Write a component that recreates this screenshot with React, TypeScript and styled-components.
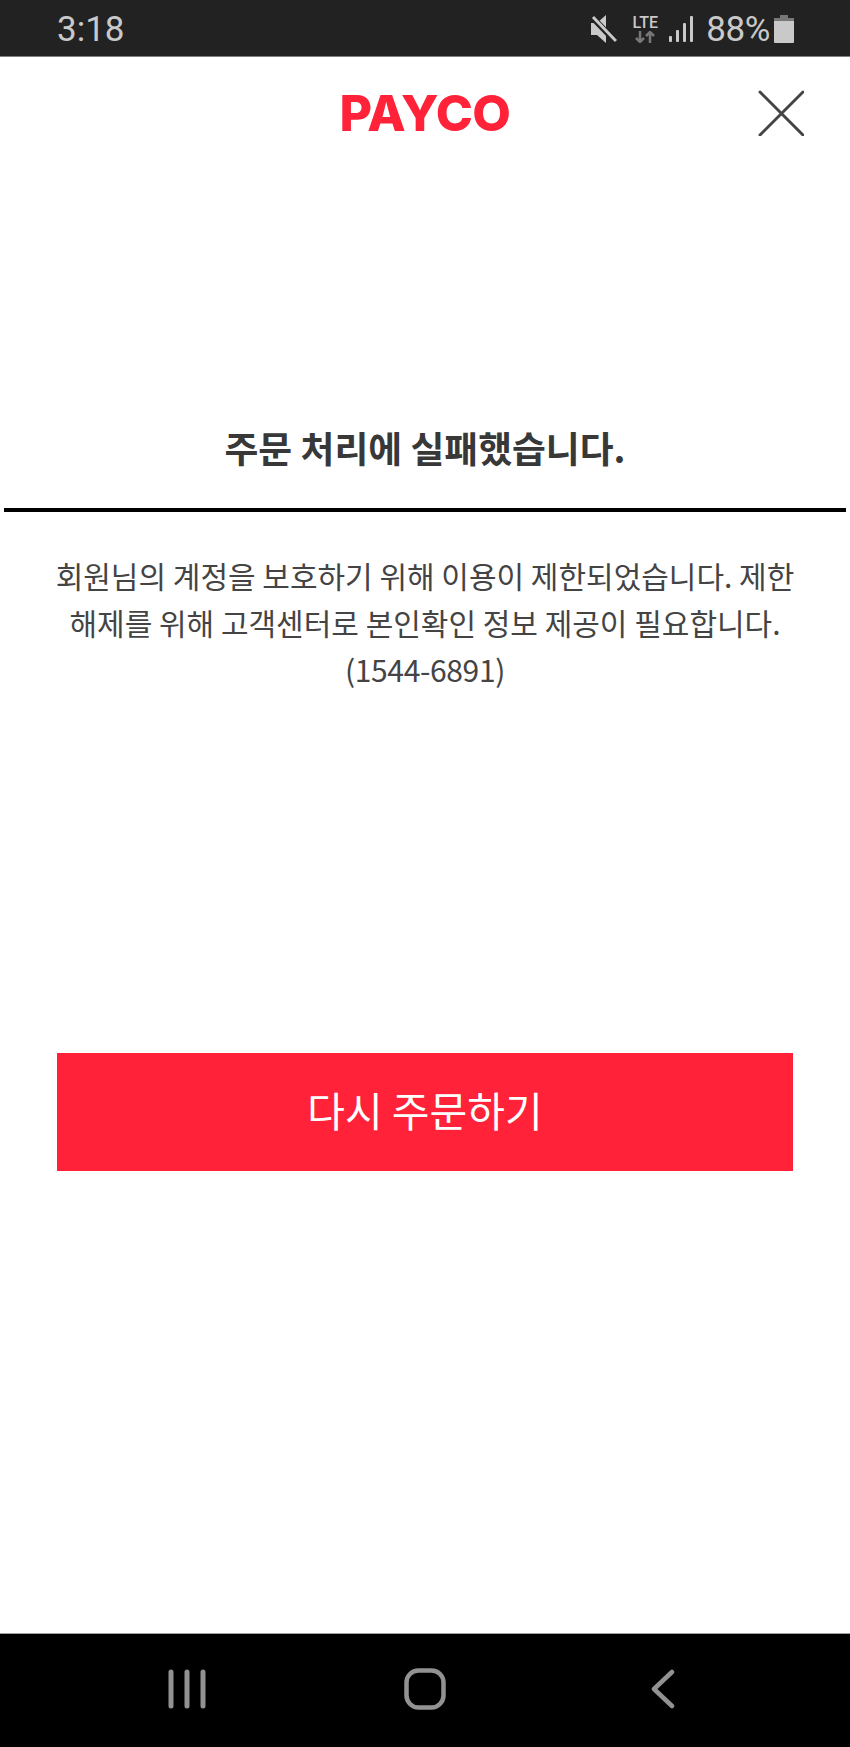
import styled, { createGlobalStyle } from "styled-components";

const colors = {
  statusBar: "#222222",
  statusText: "#c9c9c9",
  statusDim: "#777777",
  red: "#ff2239",
  title: "#383838",
  body: "#444444",
  nav: "#929292",
};

const GlobalStyle = createGlobalStyle`
  html, body {
    margin: 0;
    padding: 0;
    background: #ffffff;
  }
  * {
    box-sizing: border-box;
  }
`;

const Page = styled.div`
  width: 850px;
  height: 1747px;
  display: flex;
  flex-direction: column;
  overflow: hidden;
  background: #ffffff;
  font-family: "Noto Sans CJK KR", "Noto Sans", sans-serif;
`;

const StatusBar = styled.div`
  height: 57px;
  flex: none;
  display: flex;
  align-items: center;
  justify-content: space-between;
  padding: 2px 56px 0 57px;
  background: ${colors.statusBar};
  border-bottom: 1px solid #808080;
  color: ${colors.statusText};
  font-family: Roboto, "Liberation Sans", sans-serif;
  font-size: 35px;
`;

const StatusRight = styled.div`
  display: flex;
  align-items: center;
`;

const Percent = styled.span`
  margin: 0 4px 0 13px;
  letter-spacing: -0.4px;
`;

const Network = styled.div`
  display: flex;
  flex-direction: column;
  align-items: center;
  width: 30px;
  margin: 0 9px 0 13px;
`;

const LteLabel = styled.span`
  font-size: 16px;
  line-height: 16px;
  font-weight: 500;
`;

const Header = styled.header`
  height: 112px;
  flex: none;
  display: grid;
  grid-template-columns: 1fr auto 1fr;
  align-items: center;
`;

const Logo = styled.div`
  grid-column: 2;
  color: ${colors.red};
  font-family: Inter, "Liberation Sans", sans-serif;
  font-size: 50px;
  font-weight: 800;
  line-height: 1;
  letter-spacing: -0.6px;
`;

const CloseButton = styled.button`
  grid-column: 3;
  justify-self: end;
  width: 46px;
  height: 46px;
  margin-right: 46px;
  padding: 0;
  display: block;
  border: none;
  background: none;
`;

const Title = styled.h1`
  margin: 254px 0 0;
  color: ${colors.title};
  font-size: 36.8px;
  font-weight: 700;
  line-height: 48px;
  text-align: center;
`;

const Divider = styled.hr`
  height: 4px;
  margin: 37px 4px 0;
  border: none;
  background: #000000;
`;

const Message = styled.p`
  margin: 40px 40px 0;
  color: ${colors.body};
  font-size: 30px;
  font-weight: 400;
  line-height: 47px;
  text-align: center;
`;

const Phone = styled.span`
  letter-spacing: -0.35px;
`;

const RetryButton = styled.button`
  height: 118px;
  flex: none;
  margin: 360px 57px 0;
  padding: 0 0 6px;
  border: none;
  background: ${colors.red};
  color: #ffffff;
  font-family: inherit;
  font-size: 41px;
  font-weight: 400;
`;

const Spacer = styled.div`
  flex: 1;
`;

const NavBar = styled.nav`
  height: 114px;
  flex: none;
  display: grid;
  grid-template-columns: repeat(3, 238px);
  justify-content: center;
  align-items: center;
  justify-items: center;
  padding: 0 0 4px;
  background: #000000;
  border-top: 1px solid #a0a0a0;
`;

const App = () => {
  return (
    <Page>
      <GlobalStyle />
      <StatusBar>
        <span>3:18</span>
        <StatusRight>
          <svg width="26" height="28" viewBox="0 0 26 28">
            <path d="M0 8h6l9-8v28l-9-8H0z" fill={colors.statusText} />
            <path d="M1 2l24 25" stroke={colors.statusBar} strokeWidth="6" />
            <path d="M2 2l23 24" stroke={colors.statusText} strokeWidth="3" />
          </svg>
          <Network>
            <LteLabel>LTE</LteLabel>
            <svg width="20" height="12" viewBox="0 0 20 12">
              <path
                d="M5 0v11M1 7l4 4 4-4M15 12V1M11 5l4-4 4 4"
                fill="none"
                stroke={colors.statusDim}
                strokeWidth="2.5"
              />
            </svg>
          </Network>
          <svg width="24" height="26" viewBox="0 0 24 26">
            <rect x="0" y="20" width="3" height="6" rx="1" fill={colors.statusText} />
            <rect x="7" y="14" width="3" height="12" rx="1" fill={colors.statusText} />
            <rect x="14" y="7" width="3" height="19" rx="1" fill={colors.statusText} />
            <rect x="21" y="0" width="3" height="26" rx="1" fill={colors.statusText} />
          </svg>
          <Percent>88%</Percent>
          <svg width="20" height="28" viewBox="0 0 20 28">
            <path d="M6 0h8v3h6v5H0V3h6z" fill={colors.statusDim} />
            <path d="M0 6h20v21a1 1 0 0 1-1 1H1a1 1 0 0 1-1-1z" fill={colors.statusText} />
          </svg>
        </StatusRight>
      </StatusBar>

      <Header>
        <Logo>PAYCO</Logo>
        <CloseButton aria-label="닫기">
          <svg width="46" height="46" viewBox="0 0 46 46">
            <path d="M2 2l43 43M45 2L2 45" stroke="#444444" strokeWidth="3" strokeLinecap="round" />
          </svg>
        </CloseButton>
      </Header>

      <Title>주문 처리에 실패했습니다.</Title>
      <Divider />
      <Message>
        회원님의 계정을 보호하기 위해 이용이 제한되었습니다. 제한
        <br />
        해제를 위해 고객센터로 본인확인 정보 제공이 필요합니다.
        <br />
        <Phone>(1544-6891)</Phone>
      </Message>

      <RetryButton>다시 주문하기</RetryButton>
      <Spacer />

      <NavBar>
        <svg width="38" height="40" viewBox="0 0 38 40">
          <path
            d="M3 3v34M19 3v34M35 3v34"
            stroke={colors.nav}
            strokeWidth="5"
            strokeLinecap="round"
          />
        </svg>
        <svg width="42" height="42" viewBox="0 0 42 42">
          <rect x="2.5" y="2.5" width="37" height="37" rx="12" fill="none" stroke={colors.nav} strokeWidth="4.5" />
        </svg>
        <svg width="24" height="40" viewBox="0 0 24 40">
          <path
            d="M21 3L3 20l18 17"
            fill="none"
            stroke={colors.nav}
            strokeWidth="4.5"
            strokeLinecap="round"
            strokeLinejoin="round"
          />
        </svg>
      </NavBar>
    </Page>
  );
};

export default App;
